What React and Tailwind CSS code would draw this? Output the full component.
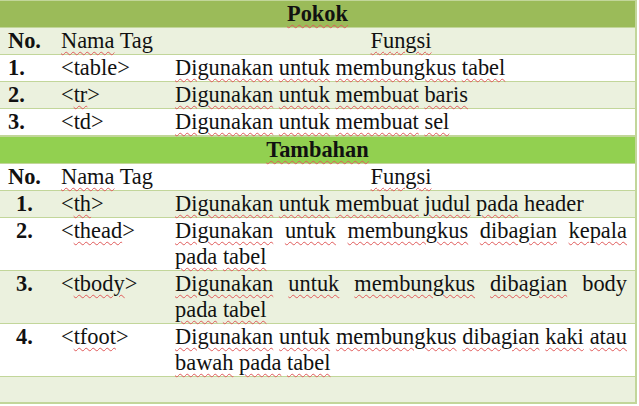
import React from 'react';

const sq = 'underline decoration-wavy decoration-[#e05a5a] decoration-1 underline-offset-[3px]';

function S({ children }) {
  return <span className={sq}>{children}</span>;
}

function Row({ bg = 'bg-white', border = 'border-b border-[#c2d69a]', children }) {
  return (
    <div className={`grid grid-cols-[61px_114px_1fr] ${bg} ${border}`}>
      {children}
    </div>
  );
}

function SectionHead({ bg, children }) {
  return (
    <div className={`${bg} border-b border-[#c2d69a] text-center font-bold`}>
      <S>{children}</S>
    </div>
  );
}

function HeaderRow({ bg }) {
  return (
    <Row bg={bg}>
      <div className="pl-2 font-bold">No.</div>
      <div>
        <S>Nama</S> Tag
      </div>
      <div className="pr-2 text-center">
        <S>Fungsi</S>
      </div>
    </Row>
  );
}

const pokok = [
  { no: '1.', tag: 'table', sq: false, fn: <><S>Digunakan</S> <S>untuk</S> <S>membungkus</S> <S>tabel</S></> },
  { no: '2.', tag: 'tr', sq: true, fn: <><S>Digunakan</S> <S>untuk</S> <S>membuat</S> <S>baris</S></> },
  { no: '3.', tag: 'td', sq: false, fn: <><S>Digunakan</S> <S>untuk</S> <S>membuat</S> <S>sel</S></> },
];

const tambahan = [
  {
    no: '1.',
    tag: 'th',
    line1: <><S>Digunakan</S> <S>untuk</S> <S>membuat</S> <S>judul</S> <S>pada</S> header</>,
  },
  {
    no: '2.',
    tag: 'thead',
    line1: <><S>Digunakan</S> <S>untuk</S> <S>membungkus</S> <S>dibagian</S> <S>kepala</S></>,
    line2: <><S>pada</S> <S>tabel</S></>,
  },
  {
    no: '3.',
    tag: 'tbody',
    line1: <><S>Digunakan</S> <S>untuk</S> <S>membungkus</S> <S>dibagian</S> body</>,
    line2: <><S>pada</S> <S>tabel</S></>,
  },
  {
    no: '4.',
    tag: 'tfoot',
    line1: <><S>Digunakan</S> <S>untuk</S> <S>membungkus</S> <S>dibagian</S> <S>kaki</S> <S>atau</S></>,
    line2: <><S>bawah</S> <S>pada</S> <S>tabel</S></>,
  },
];

export default function App() {
  return (
    <div className="w-[639px] h-[406px] bg-white overflow-hidden font-['Liberation_Serif'] text-[22.4px] leading-[26px] text-[#111]">
      <div className="w-[637px] border-t border-r-2 border-b-2 border-[#c2d69a]">
        <SectionHead bg="bg-[#9bbb59]">Pokok</SectionHead>
        <HeaderRow bg="bg-[#ebf1de]" />
        {pokok.map((r, i) => (
          <Row
            key={r.no}
            bg={i % 2 === 1 ? 'bg-[#ebf1de]' : 'bg-white'}
            border={i === pokok.length - 1 ? 'border-b-2 border-[#c2d69a]' : 'border-b border-[#c2d69a]'}
          >
            <div className="pl-2 font-bold">{r.no}</div>
            <div>
              &lt;{r.sq ? <S>{r.tag}</S> : r.tag}&gt;
            </div>
            <div className="pr-2">{r.fn}</div>
          </Row>
        ))}

        <SectionHead bg="bg-[#92d050]">Tambahan</SectionHead>
        <HeaderRow bg="bg-white" />
        {tambahan.map((r, i) => (
          <Row key={r.no} bg={i % 2 === 0 ? 'bg-[#ebf1de]' : 'bg-white'}>
            <div className="pl-4 font-bold">{r.no}</div>
            <div>
              &lt;<S>{r.tag}</S>&gt;
            </div>
            <div className="pr-2">
              {r.line2 ? (
                <>
                  <div className="text-justify [text-align-last:justify]">{r.line1}</div>
                  <div>{r.line2}</div>
                </>
              ) : (
                <div>{r.line1}</div>
              )}
            </div>
          </Row>
        ))}
        <div className="h-[25px] bg-[#ebf1de]" />
      </div>
    </div>
  );
}
